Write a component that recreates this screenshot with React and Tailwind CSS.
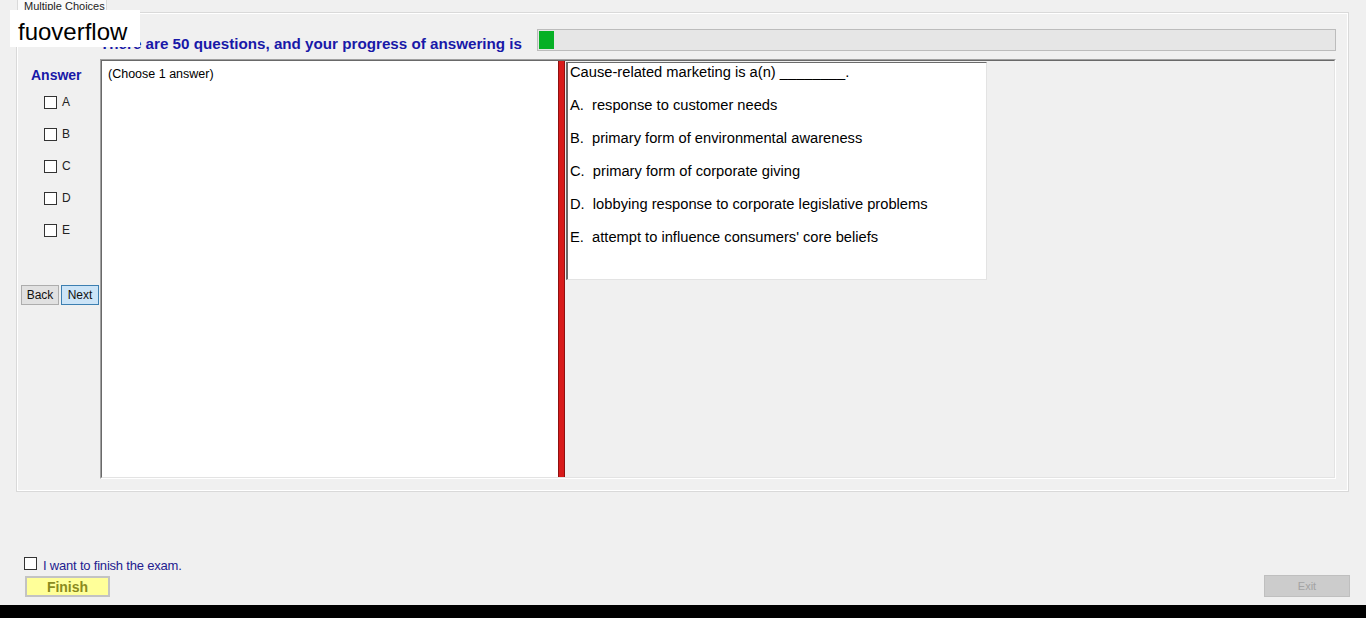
import React, { useState } from 'react';

const options = [
  { key: 'A', text: 'response to customer needs' },
  { key: 'B', text: 'primary form of environmental awareness' },
  { key: 'C', text: 'primary form of corporate giving' },
  { key: 'D', text: 'lobbying response to corporate legislative problems' },
  { key: 'E', text: "attempt to influence consumers' core beliefs" },
];

const Box = ({ checked, onClick }) => (
  <span
    onClick={onClick}
    className="inline-flex w-[13px] h-[13px] border border-[#333] bg-white items-center justify-center text-[10px] leading-none"
  >
    {checked ? '✓' : ''}
  </span>
);

const App = () => {
  const [picked, setPicked] = useState({});
  const [finish, setFinish] = useState(false);

  return (
    <div
      className="w-[1366px] h-[618px] bg-[#f0f0f0] flex flex-col overflow-hidden text-black"
      style={{ fontFamily: '"Liberation Sans", Arial, sans-serif' }}
    >
      <div className="relative flex-1 flex flex-col">
        {/* watermark */}
        <div className="absolute left-[10px] top-[10px] w-[130px] h-[37px] bg-white z-10 pl-[8px] text-[24px] leading-[44px]">
          fuoverflow
        </div>

        {/* tab strip */}
        <div className="pl-[17px] h-[12px] flex">
          <div className="w-[90px] h-[12px] bg-[#fafafa] border-x border-[#d9d9d9]">
            <div className="text-[11px] leading-[12px] pl-[6px] text-[#222]">Multiple Choices</div>
          </div>
        </div>

        {/* tab page */}
        <div className="ml-[16px] mr-[17px] h-[480px] border border-[#d9d9d9] bg-[#f0f0f0] flex flex-col">
          <div className="flex-1 border border-white flex flex-col pt-[15px] pr-[11px]">
            <div className="flex items-end h-[22px]">
              <div className="w-[82px]" />
              <div className="w-[437px] -mb-[1px] text-[15.2px] leading-[17px] font-bold text-[#1818a8]">
                There are 50 questions, and your progress of answering is
              </div>
              <div className="flex-1 h-[22px] border border-[#bcbcbc] bg-[#e6e6e6] p-[1px]">
                <div className="w-[15px] h-full bg-[#06b025]" />
              </div>
            </div>

            <div className="flex mt-[8px] h-[420px]">
              {/* answer column */}
              <div className="w-[82px] flex flex-col pt-[8px]">
                <div className="pl-[13px] text-[14px] leading-[16px] font-bold text-[#1818a8]">Answer</div>
                <div className="mt-[3px] flex flex-col">
                  {options.map((o) => (
                    <div key={o.key} className="h-[32px] pl-[26px] flex items-center gap-[5px] text-[12px]">
                      <Box
                        checked={!!picked[o.key]}
                        onClick={() => setPicked({ ...picked, [o.key]: !picked[o.key] })}
                      />
                      <span className="text-[#222]">{o.key}</span>
                    </div>
                  ))}
                </div>
                <div className="mt-[39px] pl-[3px] flex gap-[2px]">
                  <button className="w-[38px] h-[20px] border border-[#adadad] bg-[#e1e1e1] text-[12px] text-[#111]">
                    Back
                  </button>
                  <button className="w-[38px] h-[20px] border border-[#3c7fb1] bg-[#cce4f7] text-[12px] text-[#111]">
                    Next
                  </button>
                </div>
              </div>

              {/* split container */}
              <div className="flex-1 flex border-t border-l border-[#a0a0a0] border-b-white border-r-white border-b border-r">
                <div className="flex-1 flex border-t border-l border-[#696969] border-b-[#e3e3e3] border-r-[#e3e3e3] border-b border-r">
                  <div className="w-[456px] bg-white pl-[6px] pt-[6px] text-[12.5px] leading-[14px]">
                    (Choose 1 answer)
                  </div>
                  <div className="w-[7px] bg-[#d81b1b] border-x border-[#8e1010]" />
                  <div className="flex-1 bg-[#f0f0f0] pt-[1px] pl-[1px]">
                    <div className="w-[421px] h-[218px] bg-white border-t border-l-2 border-[#6b6b6b] border-b border-r border-b-[#e3e3e3] border-r-[#e3e3e3] pl-[2px] pt-[1px] text-[14.7px] leading-[16px]">
                      <div>Cause-related marketing is a(n) ________.</div>
                      <div className="flex flex-col mt-[17px] gap-[17px]">
                        {options.map((o) => (
                          <div key={o.key} className="whitespace-pre">
                            {o.key}.  {o.text}
                          </div>
                        ))}
                      </div>
                    </div>
                  </div>
                </div>
              </div>
            </div>
          </div>
        </div>

        {/* finish area */}
        <div className="flex-1 flex items-end justify-between pl-[24px] pr-[16px] pb-[8px]">
          <div className="flex flex-col">
            <div className="flex items-center gap-[6px] h-[15px]">
              <Box checked={finish} onClick={() => setFinish(!finish)} />
              <span className="text-[13px] leading-[15px] mt-[3px] text-[#23208f] -tracking-[0.2px]">I want to finish the exam.</span>
            </div>
            <button className="ml-[1px] mt-[5px] w-[85px] h-[21px] bg-[#ffff99] border-2 border-[#c3c3c3] text-[14px] leading-[16px] font-bold text-[#8a8a1e]">
              Finish
            </button>
          </div>
          <button className="w-[86px] h-[22px] bg-[#cccccc] border border-[#bfbfbf] text-[11px] text-[#a3a3a3]">
            Exit
          </button>
        </div>
      </div>
      <div className="h-[13px] bg-black" />
    </div>
  );
};

export default App;
